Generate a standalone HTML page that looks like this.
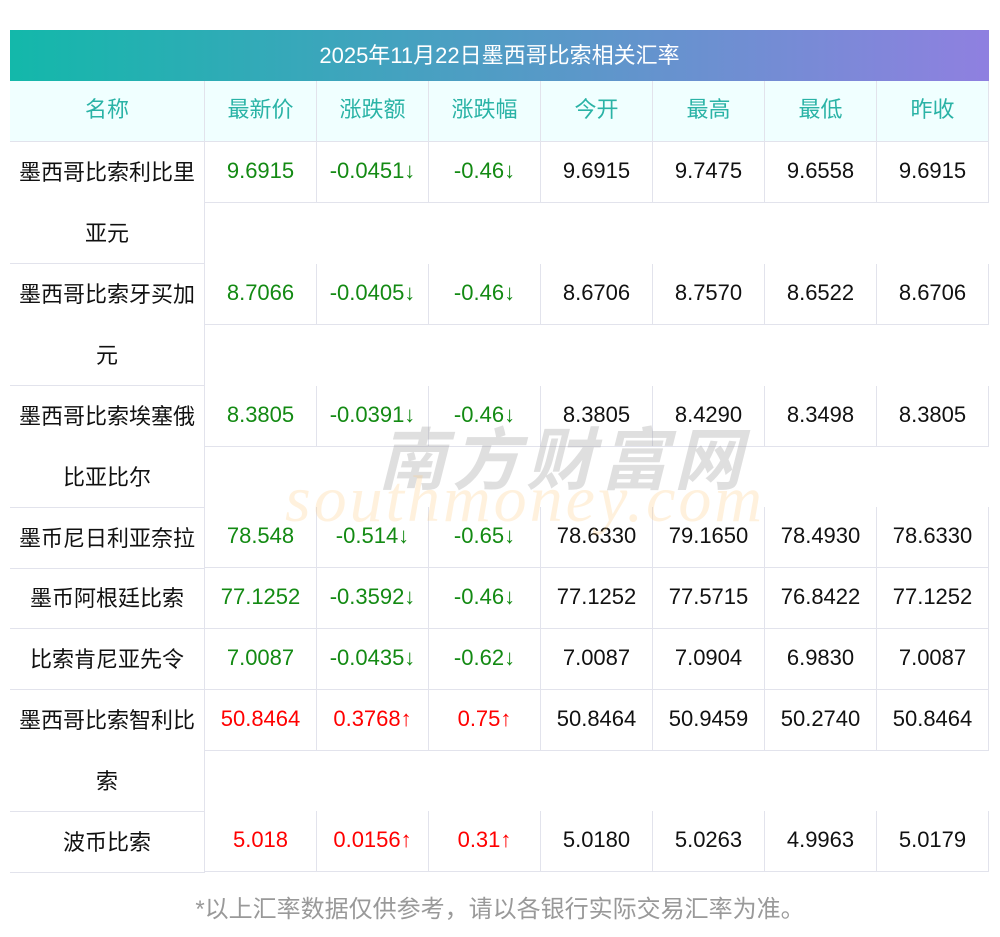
<!DOCTYPE html>
<html><head><meta charset="utf-8"><style>
body{margin:0;width:1000px;height:937px;background:#fff;position:relative;font-family:"Liberation Sans","Noto Sans CJK SC",sans-serif;overflow:hidden}
.t{position:absolute;left:10px;top:30px;width:979px;height:51px;background:linear-gradient(90deg,#13b8aa,#8f80e0);color:#fff;font-size:22px;line-height:51px;text-align:center}
.h{position:absolute;top:81px;height:60px;border-right:1px solid #e2e3ec;border-bottom:1px solid #e2e3ec;background:#f0ffff;color:#2ab3a6;font-size:22px;line-height:58px;text-align:center;box-sizing:content-box}
.n{position:absolute;left:10px;width:194px;border-right:1px solid #e2e3ec;border-bottom:1px solid #e2e3ec;font-size:22px;line-height:61px;text-align:center;color:#111}
.c{position:absolute;width:111px;height:60px;border-right:1px solid #e2e3ec;border-bottom:1px solid #e2e3ec;font-size:22px;line-height:58px;text-align:center;color:#111}
.g{color:#138a13}.r{color:#f00}
.f{position:absolute;top:889px;left:0;width:1000px;text-align:center;color:#999;font-size:24px}
.w1{position:absolute;left:378px;top:405px;font-size:68px;color:rgba(150,150,150,.3);letter-spacing:6px;font-weight:bold;font-style:italic}
.w2{position:absolute;left:285px;top:462px;font-size:66px;color:rgba(255,200,120,.25);font-family:"Liberation Serif",serif;font-style:italic;letter-spacing:3px}
</style></head><body>
<div class="t">2025年11月22日墨西哥比索相关汇率</div>
<div class="h" style="left:10px;width:194px">名称</div>
<div class="h" style="left:205px;width:111px">最新价</div>
<div class="h" style="left:317px;width:111px">涨跌额</div>
<div class="h" style="left:429px;width:111px">涨跌幅</div>
<div class="h" style="left:541px;width:111px">今开</div>
<div class="h" style="left:653px;width:111px">最高</div>
<div class="h" style="left:765px;width:111px">最低</div>
<div class="h" style="left:877px;width:111px">昨收</div>

<div class="n" style="top:142px;height:121px">墨西哥比索利比里<br>亚元</div>
<div class="c g" style="left:205px;top:142px">9.6915</div><div class="c g" style="left:317px;top:142px">-0.0451↓</div><div class="c g" style="left:429px;top:142px">-0.46↓</div><div class="c" style="left:541px;top:142px">9.6915</div><div class="c" style="left:653px;top:142px">9.7475</div><div class="c" style="left:765px;top:142px">9.6558</div><div class="c" style="left:877px;top:142px">9.6915</div>

<div class="n" style="top:264px;height:121px">墨西哥比索牙买加<br>元</div>
<div class="c g" style="left:205px;top:264px">8.7066</div><div class="c g" style="left:317px;top:264px">-0.0405↓</div><div class="c g" style="left:429px;top:264px">-0.46↓</div><div class="c" style="left:541px;top:264px">8.6706</div><div class="c" style="left:653px;top:264px">8.7570</div><div class="c" style="left:765px;top:264px">8.6522</div><div class="c" style="left:877px;top:264px">8.6706</div>

<div class="n" style="top:386px;height:121px">墨西哥比索埃塞俄<br>比亚比尔</div>
<div class="c g" style="left:205px;top:386px">8.3805</div><div class="c g" style="left:317px;top:386px">-0.0391↓</div><div class="c g" style="left:429px;top:386px">-0.46↓</div><div class="c" style="left:541px;top:386px">8.3805</div><div class="c" style="left:653px;top:386px">8.4290</div><div class="c" style="left:765px;top:386px">8.3498</div><div class="c" style="left:877px;top:386px">8.3805</div>

<div class="n" style="top:508px;height:60px">墨币尼日利亚奈拉</div>
<div class="c g" style="left:205px;top:507px">78.548</div><div class="c g" style="left:317px;top:507px">-0.514↓</div><div class="c g" style="left:429px;top:507px">-0.65↓</div><div class="c" style="left:541px;top:507px">78.6330</div><div class="c" style="left:653px;top:507px">79.1650</div><div class="c" style="left:765px;top:507px">78.4930</div><div class="c" style="left:877px;top:507px">78.6330</div>

<div class="n" style="top:568px;height:60px">墨币阿根廷比索</div>
<div class="c g" style="left:205px;top:568px">77.1252</div><div class="c g" style="left:317px;top:568px">-0.3592↓</div><div class="c g" style="left:429px;top:568px">-0.46↓</div><div class="c" style="left:541px;top:568px">77.1252</div><div class="c" style="left:653px;top:568px">77.5715</div><div class="c" style="left:765px;top:568px">76.8422</div><div class="c" style="left:877px;top:568px">77.1252</div>

<div class="n" style="top:629px;height:60px">比索肯尼亚先令</div>
<div class="c g" style="left:205px;top:629px">7.0087</div><div class="c g" style="left:317px;top:629px">-0.0435↓</div><div class="c g" style="left:429px;top:629px">-0.62↓</div><div class="c" style="left:541px;top:629px">7.0087</div><div class="c" style="left:653px;top:629px">7.0904</div><div class="c" style="left:765px;top:629px">6.9830</div><div class="c" style="left:877px;top:629px">7.0087</div>

<div class="n" style="top:690px;height:121px">墨西哥比索智利比<br>索</div>
<div class="c r" style="left:205px;top:690px">50.8464</div><div class="c r" style="left:317px;top:690px">0.3768↑</div><div class="c r" style="left:429px;top:690px">0.75↑</div><div class="c" style="left:541px;top:690px">50.8464</div><div class="c" style="left:653px;top:690px">50.9459</div><div class="c" style="left:765px;top:690px">50.2740</div><div class="c" style="left:877px;top:690px">50.8464</div>

<div class="n" style="top:812px;height:60px">波币比索</div>
<div class="c r" style="left:205px;top:811px">5.018</div><div class="c r" style="left:317px;top:811px">0.0156↑</div><div class="c r" style="left:429px;top:811px">0.31↑</div><div class="c" style="left:541px;top:811px">5.0180</div><div class="c" style="left:653px;top:811px">5.0263</div><div class="c" style="left:765px;top:811px">4.9963</div><div class="c" style="left:877px;top:811px">5.0179</div>

<div class="w1">南方财富网</div>
<div class="w2">southmoney.com</div>
<div class="f">*以上汇率数据仅供参考，请以各银行实际交易汇率为准。</div>
</body></html>
